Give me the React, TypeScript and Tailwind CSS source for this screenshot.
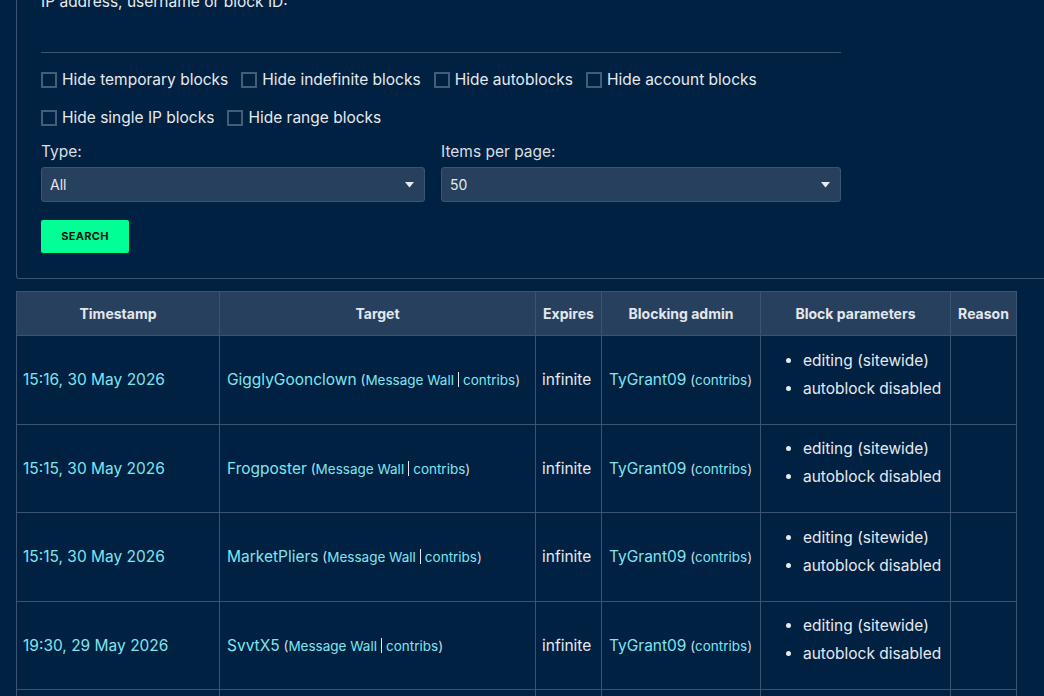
const rows = [
  { time: "15:16, 30 May 2026", target: "GigglyGoonclown" },
  { time: "15:15, 30 May 2026", target: "Frogposter" },
  { time: "15:15, 30 May 2026", target: "MarketPliers" },
  { time: "19:30, 29 May 2026", target: "SvvtX5" },
  { time: "19:28, 29 May 2026", target: "Xylophonic" },
];

function Check({ label }: { label: string }) {
  return (
    <label className="flex items-center gap-[5px]">
      <span className="h-4 w-4 border-2 border-[#435d7a]" />
      <span>{label}</span>
    </label>
  );
}

function Select({ value, wide }: { value: string; wide?: boolean }) {
  return (
    <div
      className={
        (wide ? "w-[400px] " : "w-[384px] ") +
        "flex h-[35px] items-center justify-between rounded-[3px] border border-[#3b5574] bg-[#27405e] pl-2 pr-[10px] text-[14px] text-[#e6eaee]"
      }
    >
      <span>{value}</span>
      <svg width="9" height="6" viewBox="0 0 9 6">
        <path d="M0 0h9L4.5 5.5z" fill="#e6eaee" />
      </svg>
    </div>
  );
}

function Links({ wall = true }: { wall?: boolean }) {
  return (
    <span className="text-[13.5px] text-[#d6dbe2]">
      {" ("}
      {wall && (
        <>
          <span className="text-[#80e4ef]">Message Wall</span>
          <span className="mx-[4px] inline-block h-[15px] w-px translate-y-[2px] bg-[#e6eaee]" />
        </>
      )}
      <span className="text-[#80e4ef]">contribs</span>
      {")"}
    </span>
  );
}

export default function App() {
  return (
    <div className="h-[696px] w-[1044px] overflow-hidden bg-[#002142] font-['Inter',sans-serif] text-[15.5px] text-[#e6eaee]">
      <div className="-mt-[9px] ml-4 w-[1100px] rounded-bl-[3px] border-b border-l border-[#3a5472] pb-[25px] pl-6">
        <div className="leading-[22px]">IP address, username or block ID:</div>
        <div className="h-[40px] w-[800px] border-b border-[#3a5472]" />
        <div className="mt-4 flex gap-[13px] leading-[22px]">
          <Check label="Hide temporary blocks" />
          <Check label="Hide indefinite blocks" />
          <Check label="Hide autoblocks" />
          <Check label="Hide account blocks" />
        </div>
        <div className="mt-4 flex gap-[13px] leading-[22px]">
          <Check label="Hide single IP blocks" />
          <Check label="Hide range blocks" />
        </div>
        <div className="mt-3 flex w-[800px] gap-4">
          <div>
            <div className="mb-[4px] leading-[22px] text-[#d9dee4]">Type:</div>
            <Select value="All" />
          </div>
          <div>
            <div className="mb-[4px] leading-[22px] text-[#d9dee4]">Items per page:</div>
            <Select value="50" wide />
          </div>
        </div>
        <button className="mt-[18px] h-[33px] w-[88px] rounded-[2px] bg-[#00ff94] text-[11px] font-bold tracking-[0.3px] text-[#0a0f14]">
          SEARCH
        </button>
      </div>

      <table className="ml-4 mt-[12px] w-[1000px] table-fixed border-collapse">
        <colgroup>
          <col className="w-[203px]" />
          <col className="w-[316px]" />
          <col className="w-[66px]" />
          <col className="w-[159px]" />
          <col className="w-[190px]" />
          <col className="w-[66px]" />
        </colgroup>
        <thead>
          <tr className="h-[44px] bg-[#27405e] text-[14px] font-bold text-[#e3e7ec]">
            {["Timestamp", "Target", "Expires", "Blocking admin", "Block parameters", "Reason"].map((h) => (
              <th key={h} className="whitespace-nowrap border border-[#3a5472] px-[4px] text-center">
                {h}
              </th>
            ))}
          </tr>
        </thead>
        <tbody>
          {rows.map((r, i) => (
            <tr key={i} className="h-[88.5px]">
              <td className="border border-[#3a5472] px-[6px] text-[#80e4ef]">{r.time}</td>
              <td className="whitespace-nowrap border border-[#3a5472] px-[7px]">
                <span className="text-[#80e4ef]">{r.target}</span>
                <Links />
              </td>
              <td className="border border-[#3a5472] px-[6px]">infinite</td>
              <td className="whitespace-nowrap border border-[#3a5472] px-[7px]">
                <span className="text-[#80e4ef]">TyGrant09</span>
                <Links wall={false} />
              </td>
              <td className="border border-[#3a5472] px-[6px]">
                <ul className="ml-[36px] list-disc pb-[10px] leading-[28px] marker:text-[#e6eaee]">
                  <li>editing (sitewide)</li>
                  <li>autoblock disabled</li>
                </ul>
              </td>
              <td className="border border-[#3a5472]" />
            </tr>
          ))}
        </tbody>
      </table>
    </div>
  );
}
